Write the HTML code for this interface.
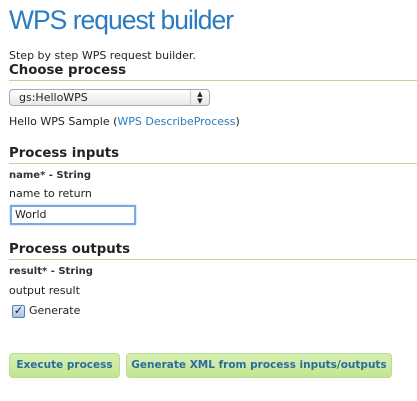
<!DOCTYPE html>
<html><head><style>
body{margin:0;width:417px;height:401px;background:#fff;font-family:"DejaVu Sans","Liberation Sans",sans-serif;color:#222;position:relative;overflow:hidden}
.a{position:absolute;white-space:nowrap}
h1{position:absolute;left:9px;top:5px;margin:0;font-weight:normal;font-size:26.5px;letter-spacing:-1px;color:#2b7bc0;font-family:"Liberation Sans",sans-serif;white-space:nowrap}
.h{font-weight:bold;font-size:13.3px;color:#222}
.line{position:absolute;left:9px;right:0;height:1px;background:#b8dc8c}
.s{font-size:11px}
.b{font-size:10px;font-weight:bold;color:#333}
.btn{position:absolute;top:353px;border:1px solid #b9dc93;border-radius:4px;background:linear-gradient(#d8f0b4,#c2e68f);color:#2a6c9e;font-weight:bold;font-size:10.5px;line-height:23px;text-align:center;box-sizing:border-box;height:25px;white-space:nowrap}
</style></head><body>
<h1>WPS request builder</h1>
<div class="a s" style="left:9px;top:49px">Step by step WPS request builder.</div>
<div class="a h" style="left:9px;top:63px">Choose process</div>
<div class="line" style="top:80px"></div>
<div class="a" style="left:9px;top:89px;width:201px;height:17px;border:1px solid #aaa;border-radius:4px;background:linear-gradient(#fff,#e8e8e8);box-sizing:border-box;font-size:11px;line-height:15px;padding-left:9px">gs:HelloWPS<span style="position:absolute;right:0;top:0;width:18px;height:15px;border-left:1px solid #ccc;font-size:7px;text-align:center;line-height:7px;padding-top:1px">▲<br>▼</span></div>
<div class="a s" style="left:9px;top:115px">Hello WPS Sample (<span style="color:#2b7bc0">WPS DescribeProcess</span>)</div>
<div class="a h" style="left:9px;top:146px">Process inputs</div>
<div class="line" style="top:163px"></div>
<div class="a b" style="left:9px;top:170px">name* - String</div>
<div class="a s" style="left:9px;top:187px">name to return</div>
<div class="a" style="left:10px;top:205px;width:126px;height:20px;border:2px solid #7aa8e0;box-shadow:0 0 2px #9cc3ef;box-sizing:border-box;font-size:11px;line-height:16px;padding-left:3px">World</div>
<div class="a h" style="left:9px;top:242px">Process outputs</div>
<div class="line" style="top:259px"></div>
<div class="a b" style="left:9px;top:266px">result* - String</div>
<div class="a s" style="left:9px;top:284px">output result</div>
<div class="a" style="left:12px;top:305px;width:11px;height:11px;border:1px solid #5a7fae;border-radius:2px;background:linear-gradient(#dbe7f7,#a9c3e6);font-size:11px;line-height:9px;color:#111;text-align:center">✓</div>
<div class="a s" style="left:29px;top:304px">Generate</div>
<div class="btn" style="left:9px;width:111px">Execute process</div>
<div class="btn" style="left:126px;width:266px">Generate XML from process inputs/outputs</div>
</body></html>
